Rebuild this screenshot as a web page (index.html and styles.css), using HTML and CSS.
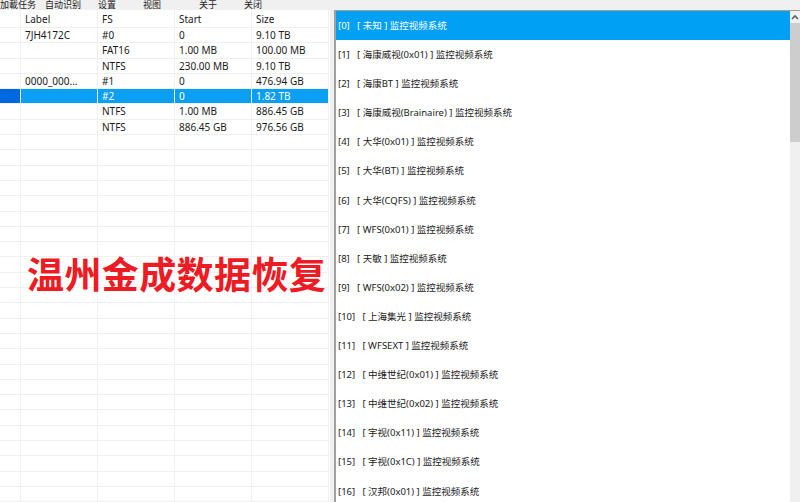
FILE: index.html
```html
<!DOCTYPE html>
<html lang="zh">
<head>
    <meta charset="utf-8">
    <link rel="stylesheet" href="styles.css">
</head>
<body>
    <div class="menubar">
        <span class="menu m1">加載任务</span>
        <span class="menu m2">自动识别</span>
        <span class="menu m3">设置</span>
        <span class="menu m4">视图</span>
        <span class="menu m5">关于</span>
        <span class="menu m6">关闭</span>
    </div>
    <div class="main">
        <!-- disk / partition table -->
        <div class="left">
            <div class="row head"><span></span><span>Label</span><span>FS</span><span>Start</span><span>Size</span></div>
            <div class="row"><span></span><span>7JH4172C</span><span>#0</span><span>0</span><span>9.10 TB</span></div>
            <div class="row"><span></span><span></span><span>FAT16</span><span>1.00 MB</span><span>100.00 MB</span></div>
            <div class="row"><span></span><span></span><span>NTFS</span><span>230.00 MB</span><span>9.10 TB</span></div>
            <div class="row"><span></span><span>0000_000...</span><span>#1</span><span>0</span><span>476.94 GB</span></div>
            <div class="row selected"><span></span><span></span><span>#2</span><span>0</span><span>1.82 TB</span></div>
            <div class="row"><span></span><span></span><span>NTFS</span><span>1.00 MB</span><span>886.45 GB</span></div>
            <div class="row"><span></span><span></span><span>NTFS</span><span>886.45 GB</span><span>976.56 GB</span></div>
            <div class="row"><span></span><span></span><span></span><span></span><span></span></div>
            <div class="row"><span></span><span></span><span></span><span></span><span></span></div>
            <div class="row"><span></span><span></span><span></span><span></span><span></span></div>
            <div class="row"><span></span><span></span><span></span><span></span><span></span></div>
            <div class="row"><span></span><span></span><span></span><span></span><span></span></div>
            <div class="row"><span></span><span></span><span></span><span></span><span></span></div>
            <div class="row"><span></span><span></span><span></span><span></span><span></span></div>
            <div class="row"><span></span><span></span><span></span><span></span><span></span></div>
            <div class="row"><span></span><span></span><span></span><span></span><span></span></div>
            <div class="row"><span></span><span></span><span></span><span></span><span></span></div>
            <div class="row"><span></span><span></span><span></span><span></span><span></span></div>
            <div class="row"><span></span><span></span><span></span><span></span><span></span></div>
            <div class="row"><span></span><span></span><span></span><span></span><span></span></div>
            <div class="row"><span></span><span></span><span></span><span></span><span></span></div>
            <div class="row"><span></span><span></span><span></span><span></span><span></span></div>
            <div class="row"><span></span><span></span><span></span><span></span><span></span></div>
            <div class="row"><span></span><span></span><span></span><span></span><span></span></div>
            <div class="row"><span></span><span></span><span></span><span></span><span></span></div>
            <div class="row"><span></span><span></span><span></span><span></span><span></span></div>
            <div class="row"><span></span><span></span><span></span><span></span><span></span></div>
            <div class="row"><span></span><span></span><span></span><span></span><span></span></div>
            <div class="row"><span></span><span></span><span></span><span></span><span></span></div>
            <div class="row"><span></span><span></span><span></span><span></span><span></span></div>
            <div class="row"><span></span><span></span><span></span><span></span><span></span></div>
            <div class="row"><span></span><span></span><span></span><span></span><span></span></div>
            <div class="watermark">温州金成数据恢复</div>
        </div>
        <div class="splitter"></div>
        <!-- file system type list -->
        <div class="right">
            <div class="list">
                <div class="item active">[0]   [ 未知 ] 监控视频系统</div>
                <div class="item">[1]   [ 海康威视(0x01) ] 监控视频系统</div>
                <div class="item">[2]   [ 海康BT ] 监控视频系统</div>
                <div class="item">[3]   [ 海康威视(Brainaire) ] 监控视频系统</div>
                <div class="item">[4]   [ 大华(0x01) ] 监控视频系统</div>
                <div class="item">[5]   [ 大华(BT) ] 监控视频系统</div>
                <div class="item">[6]   [ 大华(CQFS) ] 监控视频系统</div>
                <div class="item">[7]   [ WFS(0x01) ] 监控视频系统</div>
                <div class="item">[8]   [ 天敏 ] 监控视频系统</div>
                <div class="item">[9]   [ WFS(0x02) ] 监控视频系统</div>
                <div class="item">[10]   [ 上海集光 ] 监控视频系统</div>
                <div class="item">[11]   [ WFSEXT ] 监控视频系统</div>
                <div class="item">[12]   [ 中维世纪(0x01) ] 监控视频系统</div>
                <div class="item">[13]   [ 中维世纪(0x02) ] 监控视频系统</div>
                <div class="item">[14]   [ 宇视(0x11) ] 监控视频系统</div>
                <div class="item">[15]   [ 宇视(0x1C) ] 监控视频系统</div>
                <div class="item">[16]   [ 汉邦(0x01) ] 监控视频系统</div>
            </div>
            <div class="scrollbar">
                <div class="arrow">
                    <svg width="10" height="8" viewBox="0 0 10 8"><path d="M2 6 L5 3 L8 6" fill="none" stroke="#606060" stroke-width="1.6"/></svg>
                </div>
                <div class="thumb"></div>
            </div>
        </div>
    </div>
</body>
</html>
```

FILE: styles.css
```css
body {
    margin: 0;
    width: 800px;
    height: 502px;
    overflow: hidden;
    background: #f0f0f0;
    font-family: "Noto Sans", "Noto Sans CJK SC", sans-serif;
    font-size: 10px;
    color: #1a1a1a;
}

.menubar {
    position: relative;
    z-index: 1;
    display: flex;
    align-items: flex-start;
    height: 10px;
    background: #f0f0f0;
}

/* primary font with a short ascent keeps the line box inside the bar */
.menu {
    font-family: "Liberation Sans", "Noto Sans CJK SC", sans-serif;
    font-size: 9px;
    line-height: 10px;
    white-space: nowrap;
}

.m2 { margin-left: 9px; }
.m3 { margin-left: 17px; }
.m4 { margin-left: 27px; }
.m5 { margin-left: 38px; }
.m6 { margin-left: 27px; }

.main {
    display: flex;
    height: 492px;
}

/* left table */
.left {
    position: relative;
    width: 330px;
    background: #fff;
    overflow: hidden;
}

.row {
    display: grid;
    grid-template-columns: 21px 77px 77px 77px 77px;
    height: 15.3px;
    box-sizing: border-box;
    border-bottom: 1px solid #f0f0f0;
}

.row span {
    border-right: 1px solid #f0f0f0;
    padding-left: 4px;
    line-height: 15px;
    white-space: nowrap;
    overflow: hidden;
}

.row.head {
    height: 18px;
}

.row.head span {
    line-height: 19px;
}

.row.selected span {
    background: #0a9ff0;
    color: #fff;
}

.row.selected span:first-child {
    background: #0068e0;
}

.watermark {
    position: absolute;
    left: 27px;
    top: 241px;
    font-size: 37px;
    letter-spacing: 0.4px;
    font-weight: bold;
    color: #ed1c24;
    font-family: "Noto Sans CJK SC", sans-serif;
    line-height: 44px;
    white-space: nowrap;
}

.splitter {
    width: 6px;
    background: #f0f0f0;
    border-right: 2px solid #a0a0a0;
    box-sizing: border-box;
}

/* right list */
.right {
    flex: 1;
    display: flex;
    border-top: 1px solid #a59d93;
    background: #fff;
}

.list {
    flex: 1;
}

.item {
    height: 29.1px;
    line-height: 29px;
    padding-left: 2px;
    white-space: pre;
    font-size: 9.5px;
}

.item.active {
    background: #00a0f5;
    color: #fff;
}

.scrollbar {
    width: 10px;
    background: #f0f0f0;
    display: flex;
    flex-direction: column;
}

.arrow {
    height: 12px;
    display: flex;
    align-items: center;
}

.thumb {
    height: 119px;
    background: #cdcdcd;
}
```
